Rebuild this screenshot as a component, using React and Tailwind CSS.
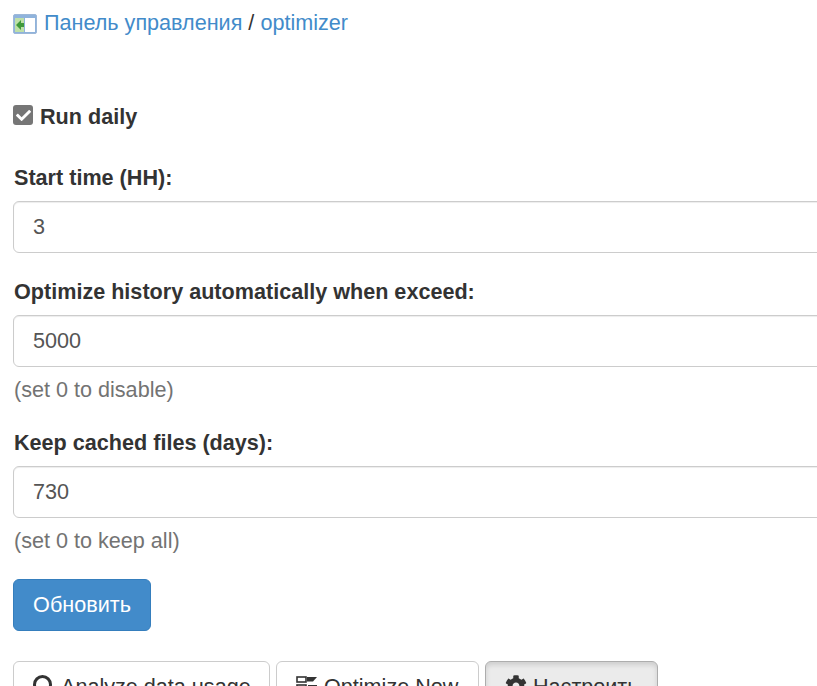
import React from "react";
import { FaCog, FaCheck } from "react-icons/fa";

function Field({ label, value, help }) {
  return (
    <div className="mb-[24px]">
      <label className="block h-[29px] pl-px leading-[29px] mb-[9px] font-bold text-[21.6px] text-[#333]">{label}</label>
      <input
        readOnly
        value={value}
        className="block w-[900px] h-[52px] px-[19px] rounded-[6px] border border-[#ccc] bg-white text-[21.6px] text-[#555] shadow-[inset_0_1px_1px_rgba(0,0,0,0.075)] outline-none"
      />
      {help && <p className="h-[29px] pl-px mt-[8px] leading-[29px] text-[21.6px] text-[#737373]">{help}</p>}
    </div>
  );
}

function PanelIcon() {
  return (
    <svg width="24" height="20" viewBox="0 0 24 20" className="shrink-0">
      <rect x="0.5" y="0.5" width="23" height="19" rx="1.5" fill="#8fb3dc" stroke="#9db8d8" />
      <rect x="2" y="4" width="9" height="14" fill="#bfe0a8" />
      <rect x="12" y="4" width="10" height="14" fill="#fff" />
      <path d="M3 11 L8 6 V9 H11 V13 H8 V16 Z" fill="#3f9a3a" />
    </svg>
  );
}

function SearchIcon() {
  return (
    <svg width="22" height="24" viewBox="0 0 22 24" className="shrink-0 mb-[1px] text-[#333]">
      <circle cx="9.5" cy="9.5" r="8" fill="none" stroke="currentColor" strokeWidth="3" />
      <path d="M15 15l6 7" stroke="currentColor" strokeWidth="3.5" />
    </svg>
  );
}

function OptimizeIcon() {
  return (
    <svg width="22" height="22" viewBox="0 0 22 22" className="shrink-0 mb-[1px] text-[#333]">
      <rect x="1" y="1" width="9" height="5" fill="none" stroke="currentColor" strokeWidth="1.6" />
      <rect x="1" y="9" width="9" height="8" fill="none" stroke="currentColor" strokeWidth="1.6" />
      <path d="M11 1h10l-4 4.5h-6z" fill="currentColor" />
      <path d="M12 10h9M12 15h9" stroke="currentColor" strokeWidth="2" />
    </svg>
  );
}

export default function App() {
  return (
    <div className="h-[686px] overflow-hidden bg-white pl-[13px] font-['Liberation_Sans',Arial,sans-serif] text-[21.6px] text-[#333]">
      <div className="flex items-center gap-[7px] h-[29px] mt-[9px] text-[#428bca]">
        <PanelIcon />
        <div className="whitespace-nowrap">
          <a>Панель управления</a>
          <span className="text-[#333]"> / </span>
          <a>optimizer</a>
        </div>
      </div>

      <div className="flex items-center gap-[7px] h-[29px] mt-[65px] mb-[31px]">
        <span className="flex h-[20px] w-[20px] mb-[5px] items-center justify-center rounded-[3px] bg-[#767676] text-white">
          <FaCheck size={15} />
        </span>
        <span className="font-bold">Run daily</span>
      </div>

      <Field label="Start time (HH):" value="3" />
      <Field label="Optimize history automatically when exceed:" value="5000" help="(set 0 to disable)" />
      <Field label="Keep cached files (days):" value="730" help="(set 0 to keep all)" />

      <button className="block h-[52px] w-[138px] mt-0 rounded-[6px] border border-[#357ebd] bg-[#428bca] text-white text-[21.6px]">
        Обновить
      </button>

      <div className="flex gap-[6px] mt-[30px]">
        <button className="flex items-center gap-[6px] h-[52px] w-[257px] px-[19px] rounded-[6px] border border-[#ccc] bg-white">
          <SearchIcon />
          <span className="whitespace-nowrap">Analyze data usage</span>
        </button>
        <button className="flex items-center gap-[6px] h-[52px] w-[203px] px-[19px] rounded-[6px] border border-[#ccc] bg-white">
          <OptimizeIcon />
          <span className="whitespace-nowrap">Optimize Now</span>
        </button>
        <button className="flex items-center gap-[6px] h-[52px] w-[173px] px-[19px] rounded-[6px] border border-[#adadad] bg-[#ebebeb] shadow-[inset_0_3px_5px_rgba(0,0,0,0.125)]">
          <FaCog size={22} className="shrink-0 mb-[3px]" />
          <span className="whitespace-nowrap">Настроить</span>
        </button>
      </div>
    </div>
  );
}
